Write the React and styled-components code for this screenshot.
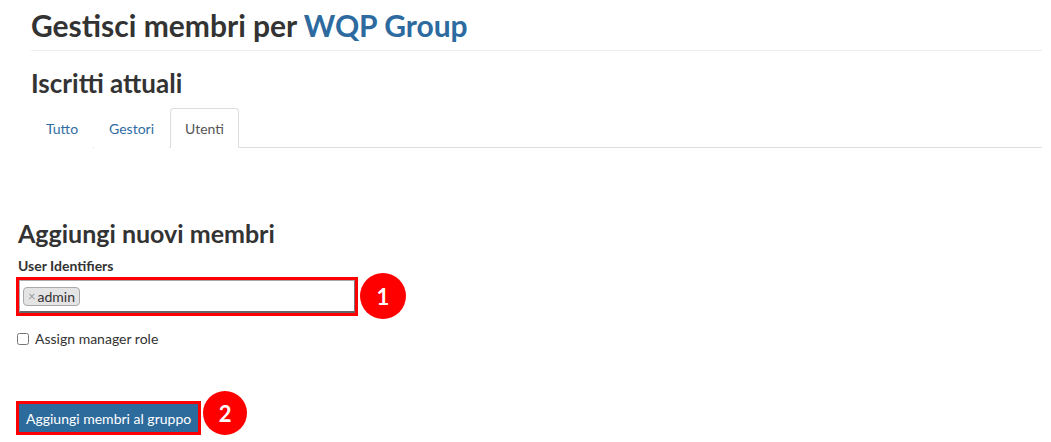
import React from "react";
import styled, { createGlobalStyle } from "styled-components";

const Global = createGlobalStyle`
  html, body { margin: 0; padding: 0; background: #fff; }
  body { font-family: Lato, "Open Sans", sans-serif; color: #333; }
  * { box-sizing: border-box; }
`;

const Page = styled.div`
  width: 1051px;
  height: 442px;
  overflow: hidden;
`;

const TopSection = styled.section`
  margin: 0 9px 0 31px;
`;

const Title = styled.h1`
  margin: 0;
  padding: 9px 0 8px;
  font-size: 30px;
  line-height: 33px;
  font-weight: 700;
  color: #333;
  border-bottom: 1px solid #eee;
`;

const TitleLink = styled.a`
  color: #2c6aa0;
  text-decoration: none;
`;

const SubTitle = styled.h2`
  margin: ${(p) => p.$mt || 0}px 0 0;
  font-size: ${(p) => p.$size || 24}px;
  line-height: 28px;
  font-weight: 700;
  color: #333;
`;

const Tabs = styled.ul`
  list-style: none;
  margin: 11px 0 0;
  padding: 0;
  display: flex;
  height: 40px;
  border-bottom: 1px solid #ddd;
`;

const Tab = styled.li`
  height: 40px;
  margin-right: 1px;
  padding: 0 14px;
  display: flex;
  align-items: center;
  font-size: 14px;
  border: 1px solid ${(p) => (p.$active ? "#ddd" : "transparent")};
  border-bottom-color: ${(p) => (p.$active ? "#fff" : "transparent")};
  border-radius: 4px 4px 0 0;
  background: #fff;
  color: ${(p) => (p.$active ? "#555" : "#2f6ca3")};
  margin-bottom: -1px;
`;

const AddSection = styled.section`
  padding-left: 18px;
  margin-top: 71px;
`;

const FieldLabel = styled.label`
  display: block;
  margin-top: 10px;
  font-size: 14px;
  line-height: 18px;
  font-weight: 700;
  color: #333;
`;

const Row = styled.div`
  display: flex;
  align-items: flex-start;
  gap: 2px;
  margin-top: ${(p) => p.$mt || 0}px;
  margin-left: -2px;
`;

const Highlight = styled.div`
  border: 3px solid #ff0000;
`;

const InputBox = styled.div`
  width: 336px;
  height: 33px;
  border: 1px solid #aaa;
  border-right-color: #777;
  border-bottom: 2px solid #666;
  background: #fff;
  display: flex;
  align-items: center;
  padding-left: 3px;
`;

const Tag = styled.span`
  display: inline-flex;
  align-items: center;
  height: 19px;
  padding: 0 4px 0 4px;
  background: #e4e4e4;
  border: 1px solid #aaa;
  border-radius: 4px;
  font-size: 14px;
  color: #333;
`;

const TagX = styled.span`
  color: #999;
  font-size: 13px;
  margin-right: 2px;
`;

const Badge = styled.div`
  width: ${(p) => p.$size}px;
  height: ${(p) => p.$size}px;
  margin-top: ${(p) => p.$mt}px;
  border-radius: 50%;
  background: #ff0000;
  color: #fff;
  font-weight: 700;
  font-size: 22px;
  display: flex;
  align-items: center;
  justify-content: center;
  flex-shrink: 0;
`;

const CheckRow = styled.label`
  display: flex;
  align-items: center;
  gap: 6px;
  margin-top: 10px;
  margin-left: -1px;
  font-size: 14px;
  line-height: 20px;
  color: #333;
`;

const Check = styled.input`
  width: 12px;
  height: 12px;
  margin: 0;
`;

const Button = styled.button`
  height: 28px;
  padding: 0 7px;
  border: none;
  background: #2e6b9d;
  color: #fff;
  font-family: Lato, "Open Sans", sans-serif;
  font-size: 14px;
  display: block;
`;

export default function App() {
  return (
    <Page>
      <Global />
      <TopSection>
        <Title>
          Gestisci membri per <TitleLink>WQP Group</TitleLink>
        </Title>
        <SubTitle $mt={18} $size={26}>Iscritti attuali</SubTitle>
        <Tabs>
          <Tab>Tutto</Tab>
          <Tab>Gestori</Tab>
          <Tab $active>Utenti</Tab>
        </Tabs>
      </TopSection>
      <AddSection>
        <SubTitle $size={25}>Aggiungi nuovi membri</SubTitle>
        <FieldLabel>User Identifiers</FieldLabel>
        <Row $mt={2}>
          <Highlight>
            <InputBox>
              <Tag>
                <TagX>×</TagX>admin
              </Tag>
            </InputBox>
          </Highlight>
          <Badge $size={46} $mt={-4}>1</Badge>
        </Row>
        <CheckRow>
          <Check type="checkbox" />
          Assign manager role
        </CheckRow>
        <Row $mt={52}>
          <Highlight>
            <Button>Aggiungi membri al gruppo</Button>
          </Highlight>
          <Badge $size={44} $mt={-10}>2</Badge>
        </Row>
      </AddSection>
    </Page>
  );
}
